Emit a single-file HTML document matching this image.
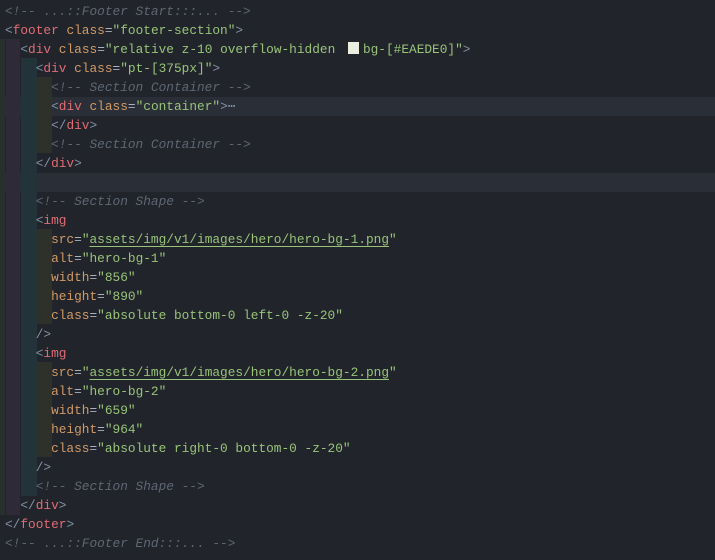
<!DOCTYPE html>
<html><head><meta charset="utf-8">
<style>
html,body{margin:0;padding:0;background:#21252b;width:715px;height:560px;overflow:hidden}
.wrap{position:relative;width:715px;height:560px;background:#21252b}
.hl{position:absolute;left:0;width:715px;height:19px;background:#2a2e37}
.g{position:absolute}
pre{position:absolute;left:5px;top:1.5px;margin:0;font-family:"Liberation Mono",monospace;font-size:12.8px;line-height:19px;color:#abb2bf;white-space:pre}
.c{color:#5f6673;font-style:italic}
.p{color:#8391a3}
.t{color:#e06c75}
.a{color:#d19a66}
.s{color:#98c379}
.u{text-decoration:underline;text-decoration-color:#98c379;text-underline-offset:3px}
.e{color:#abb2bf}
.sw{display:inline-block;width:11px;height:12px;background:#EAEDE0;margin:0 4px 0 5px;vertical-align:-1px}
.dots{color:#8391a3}
</style></head><body><div class="wrap">
<div class="hl" style="top:96.5px"></div>
<div class="hl" style="top:172.5px"></div>
<div class="g" style="left:0;top:39px;width:5px;height:476px;background:#27302c"></div>
<div class="g" style="left:6px;top:39px;width:14px;height:476px;background:#2e2a38"></div>
<div class="g" style="left:21px;top:58px;width:16px;height:438px;background:#22343a"></div>
<div class="g" style="left:37px;top:77px;width:15px;height:76px;background:#2e3129"></div>
<div class="g" style="left:37px;top:229px;width:15px;height:95px;background:#2e3129"></div>
<div class="g" style="left:37px;top:362px;width:15px;height:95px;background:#2e3129"></div>
<pre><span class="c">&lt;!-- ...::Footer Start:::... --&gt;</span>
<span class="p">&lt;</span><span class="t">footer</span> <span class="a">class</span><span class="e">=</span><span class="s">"footer-section"</span><span class="p">&gt;</span>
  <span class="p">&lt;</span><span class="t">div</span> <span class="a">class</span><span class="e">=</span><span class="s">"relative z-10 overflow-hidden <span class="sw"></span>bg-[#EAEDE0]"</span><span class="p">&gt;</span>
    <span class="p">&lt;</span><span class="t">div</span> <span class="a">class</span><span class="e">=</span><span class="s">"pt-[375px]"</span><span class="p">&gt;</span>
      <span class="c">&lt;!-- Section Container --&gt;</span>
      <span class="p">&lt;</span><span class="t">div</span> <span class="a">class</span><span class="e">=</span><span class="s">"container"</span><span class="p">&gt;</span><span class="dots">⋯</span>
      <span class="p">&lt;/</span><span class="t">div</span><span class="p">&gt;</span>
      <span class="c">&lt;!-- Section Container --&gt;</span>
    <span class="p">&lt;/</span><span class="t">div</span><span class="p">&gt;</span>

    <span class="c">&lt;!-- Section Shape --&gt;</span>
    <span class="p">&lt;</span><span class="t">img</span>
      <span class="a">src</span><span class="e">=</span><span class="s">"<span class="u">assets/img/v1/images/hero/hero-bg-1.png</span>"</span>
      <span class="a">alt</span><span class="e">=</span><span class="s">"hero-bg-1"</span>
      <span class="a">width</span><span class="e">=</span><span class="s">"856"</span>
      <span class="a">height</span><span class="e">=</span><span class="s">"890"</span>
      <span class="a">class</span><span class="e">=</span><span class="s">"absolute bottom-0 left-0 -z-20"</span>
    <span class="p">/&gt;</span>
    <span class="p">&lt;</span><span class="t">img</span>
      <span class="a">src</span><span class="e">=</span><span class="s">"<span class="u">assets/img/v1/images/hero/hero-bg-2.png</span>"</span>
      <span class="a">alt</span><span class="e">=</span><span class="s">"hero-bg-2"</span>
      <span class="a">width</span><span class="e">=</span><span class="s">"659"</span>
      <span class="a">height</span><span class="e">=</span><span class="s">"964"</span>
      <span class="a">class</span><span class="e">=</span><span class="s">"absolute right-0 bottom-0 -z-20"</span>
    <span class="p">/&gt;</span>
    <span class="c">&lt;!-- Section Shape --&gt;</span>
  <span class="p">&lt;/</span><span class="t">div</span><span class="p">&gt;</span>
<span class="p">&lt;/</span><span class="t">footer</span><span class="p">&gt;</span>
<span class="c">&lt;!-- ...::Footer End:::... --&gt;</span></pre>
</div></body></html>
